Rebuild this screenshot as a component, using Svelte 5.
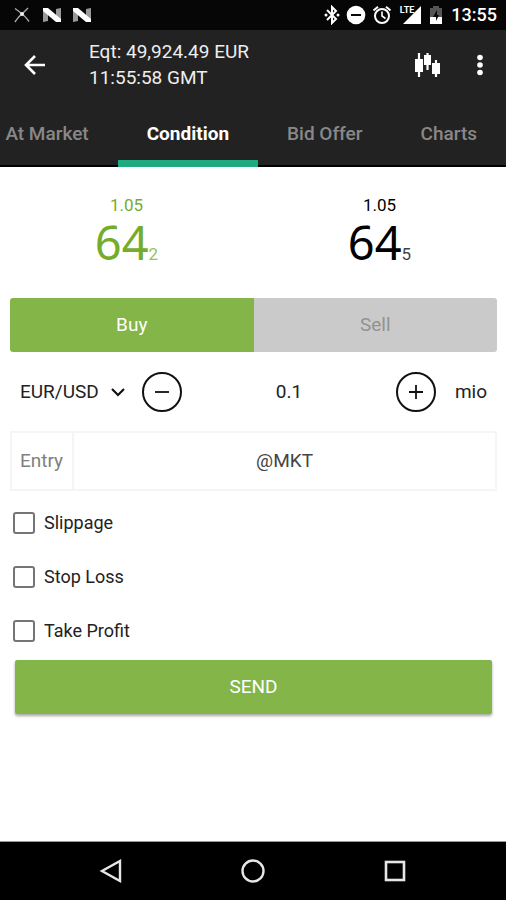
<script>
  const tabs = ['At Market', 'Condition', 'Bid Offer', 'Charts'];
  const sides = ['Buy', 'Sell'];
  const quotes = [
    { side: 'bid', big: '1.05', pips: '64', tenth: '2' },
    { side: 'ask', big: '1.05', pips: '64', tenth: '5' }
  ];
  const options = ['Slippage', 'Stop Loss', 'Take Profit'];

  let activeTab = $state('Condition');
  let side = $state('Buy');
  let pair = $state('EUR/USD');
  let amount = $state('0.1');
  let entry = $state('@MKT');

  function step(delta) {
    amount = Math.max(0.1, Number(amount) + delta).toFixed(1);
  }
</script>

<div class="screen">
  <div class="status">
    <div class="notifications">
      <svg class="spark" width="16" height="16" viewBox="0 0 16 16" aria-hidden="true">
        <path d="M1 1.5Q6 5 8 7Q11 9 15 14.500M14 1Q10 5 8 7Q5 9 1 15" fill="none" stroke="#aaa" stroke-width="1.4" />
        <circle cx="8" cy="7" r="2" fill="#eee" />
      </svg>
      {#each [0, 1] as n (n)}
        <svg width="20" height="16" viewBox="0 0 20 16" aria-hidden="true">
          <path d="M1 2L6 1V14L1 15ZM14 2L19 1V14L14 15Z" fill="#999" />
          <path d="M1 1H6L19 12V15H14L1 4Z" fill="#fff" />
        </svg>
      {/each}
    </div>
    <div class="system">
      <svg width="16" height="20" viewBox="0 0 16 20" aria-hidden="true">
        <path d="M3 5L12 14L8 18V2L12 6L3 15" fill="none" stroke="#fff" stroke-width="2" />
        <circle cx="2" cy="10" r="1.500" fill="#fff" />
        <circle cx="14" cy="10" r="1.500" fill="#fff" />
      </svg>
      <svg width="20" height="20" viewBox="0 0 20 20" aria-hidden="true">
        <circle cx="10" cy="10" r="9.300" fill="#fff" />
        <path d="M5 10H15" stroke="#080808" stroke-width="2" />
      </svg>
      <svg width="20" height="20" viewBox="0 0 20 20" aria-hidden="true">
        <circle cx="10" cy="11" r="7" fill="none" stroke="#fff" stroke-width="2" />
        <path d="M1.500 5.500L6 1.800M18.500 5.500L14 1.800" stroke="#fff" stroke-width="2" />
        <path d="M10 6.500V11L13.500 13.500" fill="none" stroke="#fff" stroke-width="1.600" />
      </svg>
      <div class="signal">
        <span>LTE</span>
        <svg width="18" height="18" viewBox="0 0 18 18" aria-hidden="true">
          <path d="M18 0V18H0Z" fill="#fff" />
        </svg>
      </div>
      <svg class="battery" width="14" height="20" viewBox="0 0 14 20" aria-hidden="true">
        <path d="M1 3H4V1H10V3H13V12H1Z" fill="#555" />
        <path d="M1 12H13V19H1Z" fill="#fff" />
        <path d="M8 5L4 12H7V16L10 10H8Z" fill="#080808" />
      </svg>
      <time>13:55</time>
    </div>
  </div>

  <header>
    <button class="icon" aria-label="Back">
      <svg width="22" height="20" viewBox="0 0 22 20" aria-hidden="true">
        <path d="M21 10H2.500M11 1L2 10L11 19" fill="none" stroke="#fff" stroke-width="2.600" />
      </svg>
    </button>
    <div class="account">
      <div>Eqt: 49,924.49 EUR</div>
      <div>11:55:58 GMT</div>
    </div>
    <button class="icon chart" aria-label="Chart">
      <svg width="26" height="26" viewBox="0 0 26 26" aria-hidden="true">
        <path d="M5 1V25M13.500 1V18M22 8V25" stroke="#fff" stroke-width="2.200" />
        <path d="M1 7H9V20H1ZM10 3H17V13H10ZM18 11H26V22H18Z" fill="#fff" />
      </svg>
    </button>
    <button class="icon" aria-label="More options">
      <svg width="8" height="22" viewBox="0 0 8 22" aria-hidden="true">
        <circle cx="4" cy="3.500" r="2.800" fill="#fff" />
        <circle cx="4" cy="11" r="2.800" fill="#fff" />
        <circle cx="4" cy="18.500" r="2.800" fill="#fff" />
      </svg>
    </button>
  </header>

  <nav class="tabs">
    {#each tabs as tab (tab)}
      <button class:active={activeTab === tab} onclick={() => (activeTab = tab)}>{tab}</button>
    {/each}
  </nav>

  <main>
    <div class="quotes">
      {#each quotes as q (q.side)}
        <div class="quote {q.side}">
          <div class="big">{q.big}</div>
          <div class="pips">{q.pips}<span>{q.tenth}</span></div>
        </div>
      {/each}
    </div>

    <div class="sides">
      {#each sides as s (s)}
        <button class:active={side === s} onclick={() => (side = s)}>{s}</button>
      {/each}
    </div>

    <div class="order">
      <div class="pair">
        <select aria-label="Instrument" bind:value={pair}>
          <option>EUR/USD</option>
        </select>
        <svg width="16" height="10" viewBox="0 0 16 10" aria-hidden="true">
          <path d="M2 2L8 8L14 2" fill="none" stroke="#111" stroke-width="2.200" />
        </svg>
      </div>
      <button class="round" aria-label="Decrease amount" onclick={() => step(-0.1)}>
        <svg width="14" height="14" viewBox="0 0 14 14" aria-hidden="true">
          <path d="M0 7H14" stroke="#111" stroke-width="1.800" />
        </svg>
      </button>
      <input class="amount" aria-label="Amount" bind:value={amount} />
      <button class="round" aria-label="Increase amount" onclick={() => step(0.1)}>
        <svg width="14" height="14" viewBox="0 0 14 14" aria-hidden="true">
          <path d="M0 7H14M7 0V14" stroke="#111" stroke-width="1.800" />
        </svg>
      </button>
      <span class="unit">mio</span>
    </div>

    <div class="entry">
      <label for="entry">Entry</label>
      <input id="entry" bind:value={entry} />
    </div>

    <div class="options">
      {#each options as option (option)}
        <label><input type="checkbox" />{option}</label>
      {/each}
    </div>

    <button class="send">SEND</button>
  </main>

  <nav class="system-nav">
    <button aria-label="Back">
      <svg width="24" height="24" viewBox="0 0 24 24" aria-hidden="true">
        <path d="M21 2V22L3 12Z" fill="none" stroke="#e6e6e6" stroke-width="2.400" />
      </svg>
    </button>
    <button aria-label="Home">
      <svg width="24" height="24" viewBox="0 0 24 24" aria-hidden="true">
        <circle cx="12" cy="12" r="10.500" fill="none" stroke="#e6e6e6" stroke-width="2.400" />
      </svg>
    </button>
    <button aria-label="Recent apps">
      <svg width="24" height="24" viewBox="0 0 24 24" aria-hidden="true">
        <rect x="3" y="3" width="18" height="18" fill="none" stroke="#e6e6e6" stroke-width="2.600" />
      </svg>
    </button>
  </nav>
</div>

<style>
  :global(body) {
    margin: 0;
    background: #fff;
  }

  .screen {
    display: flex;
    flex-direction: column;
    min-height: 100vh;
    font-family: Roboto, 'Noto Sans', sans-serif;
    font-size: 19px;
    line-height: 26px;
    color: #222;
  }

  button,
  input,
  select {
    margin: 0;
    padding: 0;
    border: 0;
    background: none;
    color: inherit;
    font: inherit;
  }

  svg {
    display: block;
    flex: none;
  }

  .status {
    display: flex;
    justify-content: space-between;
    align-items: center;
    height: 30px;
    padding: 0 9px 0 14px;
    background: #060606;
    color: #fff;
  }

  .notifications,
  .system {
    display: flex;
    align-items: center;
    gap: 10px;
  }

  .system {
    gap: 6px;
  }

  .spark {
    margin-right: 2px;
  }

  .signal {
    display: flex;
    align-items: center;
    margin: 0 2px;
  }

  .signal span {
    align-self: flex-start;
    margin-right: -11px;
    font-size: 9px;
    font-weight: 700;
    line-height: 9px;
  }

  time {
    padding-left: 2px;
    font-size: 18px;
    font-weight: 500;
  }

  header {
    display: flex;
    align-items: center;
    height: 70px;
    padding: 0 22px 0 24px;
    background: #222;
    color: #eee;
  }

  .icon {
    display: flex;
    align-items: center;
  }

  .account {
    flex: 1;
    padding-left: 43px;
  }

  .chart {
    margin-right: 36px;
  }

  .tabs {
    display: flex;
    justify-content: flex-end;
    height: 67px;
    overflow: hidden;
    background: #222;
    box-shadow: inset 0 -2px #000;
  }

  .tabs button {
    flex: none;
    padding: 0 29px;
    border-top: 7px solid transparent;
    border-bottom: 7px solid transparent;
    color: #888;
    font-weight: 500;
  }

  .tabs .active {
    border-bottom-color: #1fab80;
    color: #fff;
    font-weight: 700;
  }

  main {
    flex: 1;
    padding: 0 9px 0 10px;
  }

  .quotes {
    display: flex;
    margin: 0 -9px 0 -10px;
    padding: 26px 0 30px;
  }

  .quote {
    flex: 1;
    color: #000;
    text-align: center;
  }

  .bid {
    color: #75ad2b;
  }

  .big {
    font-size: 17px;
    line-height: 24px;
  }

  .pips {
    font-family: 'Noto Sans', sans-serif;
    font-size: 47px;
    line-height: 51px;
  }

  .pips span {
    font-family: Roboto, sans-serif;
    font-size: 17px;
    line-height: 18px;
    opacity: 0.75;
  }

  .sides {
    display: flex;
    height: 54px;
    overflow: hidden;
    border-radius: 3px;
  }

  .sides button {
    flex: 1;
    background: #cacaca;
    color: #929292;
  }

  .sides .active {
    background: #84b549;
    color: #fff;
  }

  .order {
    display: flex;
    align-items: center;
    height: 79px;
    padding: 0 10px;
  }

  .pair {
    display: flex;
    align-items: center;
    margin-right: 16px;
  }

  .pair select {
    width: 90px;
    appearance: none;
  }

  .round {
    display: flex;
    flex: none;
    align-items: center;
    justify-content: center;
    width: 40px;
    height: 40px;
    border: 2px solid #111;
    border-radius: 50%;
  }

  .amount {
    flex: 1;
    min-width: 0;
    text-align: center;
  }

  .unit {
    padding-left: 19px;
  }

  .entry {
    display: flex;
    height: 56px;
    border: 2px solid #f5f5f5;
  }

  .entry label {
    padding: 0 9px 0 8px;
    border-right: 2px solid #f5f5f5;
    color: #808080;
    line-height: 56px;
  }

  .entry input {
    flex: 1;
    min-width: 0;
    color: #444;
    text-align: center;
  }

  .options label {
    display: flex;
    align-items: center;
    height: 54px;
    padding-left: 3px;
    font-size: 18px;
  }

  .options {
    padding-top: 5px;
  }

  .options input {
    width: 22px;
    height: 22px;
    margin-right: 9px;
    border: 2px solid #757575;
    border-radius: 3px;
    appearance: none;
  }

  .send {
    display: block;
    width: calc(100% - 10px);
    height: 54px;
    margin: 2px 5px 20px;
    border-radius: 2px;
    background: #84b549;
    box-shadow: 0 2px 3px rgb(0 0 0 / 35%);
    color: #fff;
  }

  .system-nav {
    display: flex;
    align-items: center;
    justify-content: center;
    gap: 118px;
    height: 58px;
    border-top: 1px solid #999;
    background: #000;
  }
</style>
